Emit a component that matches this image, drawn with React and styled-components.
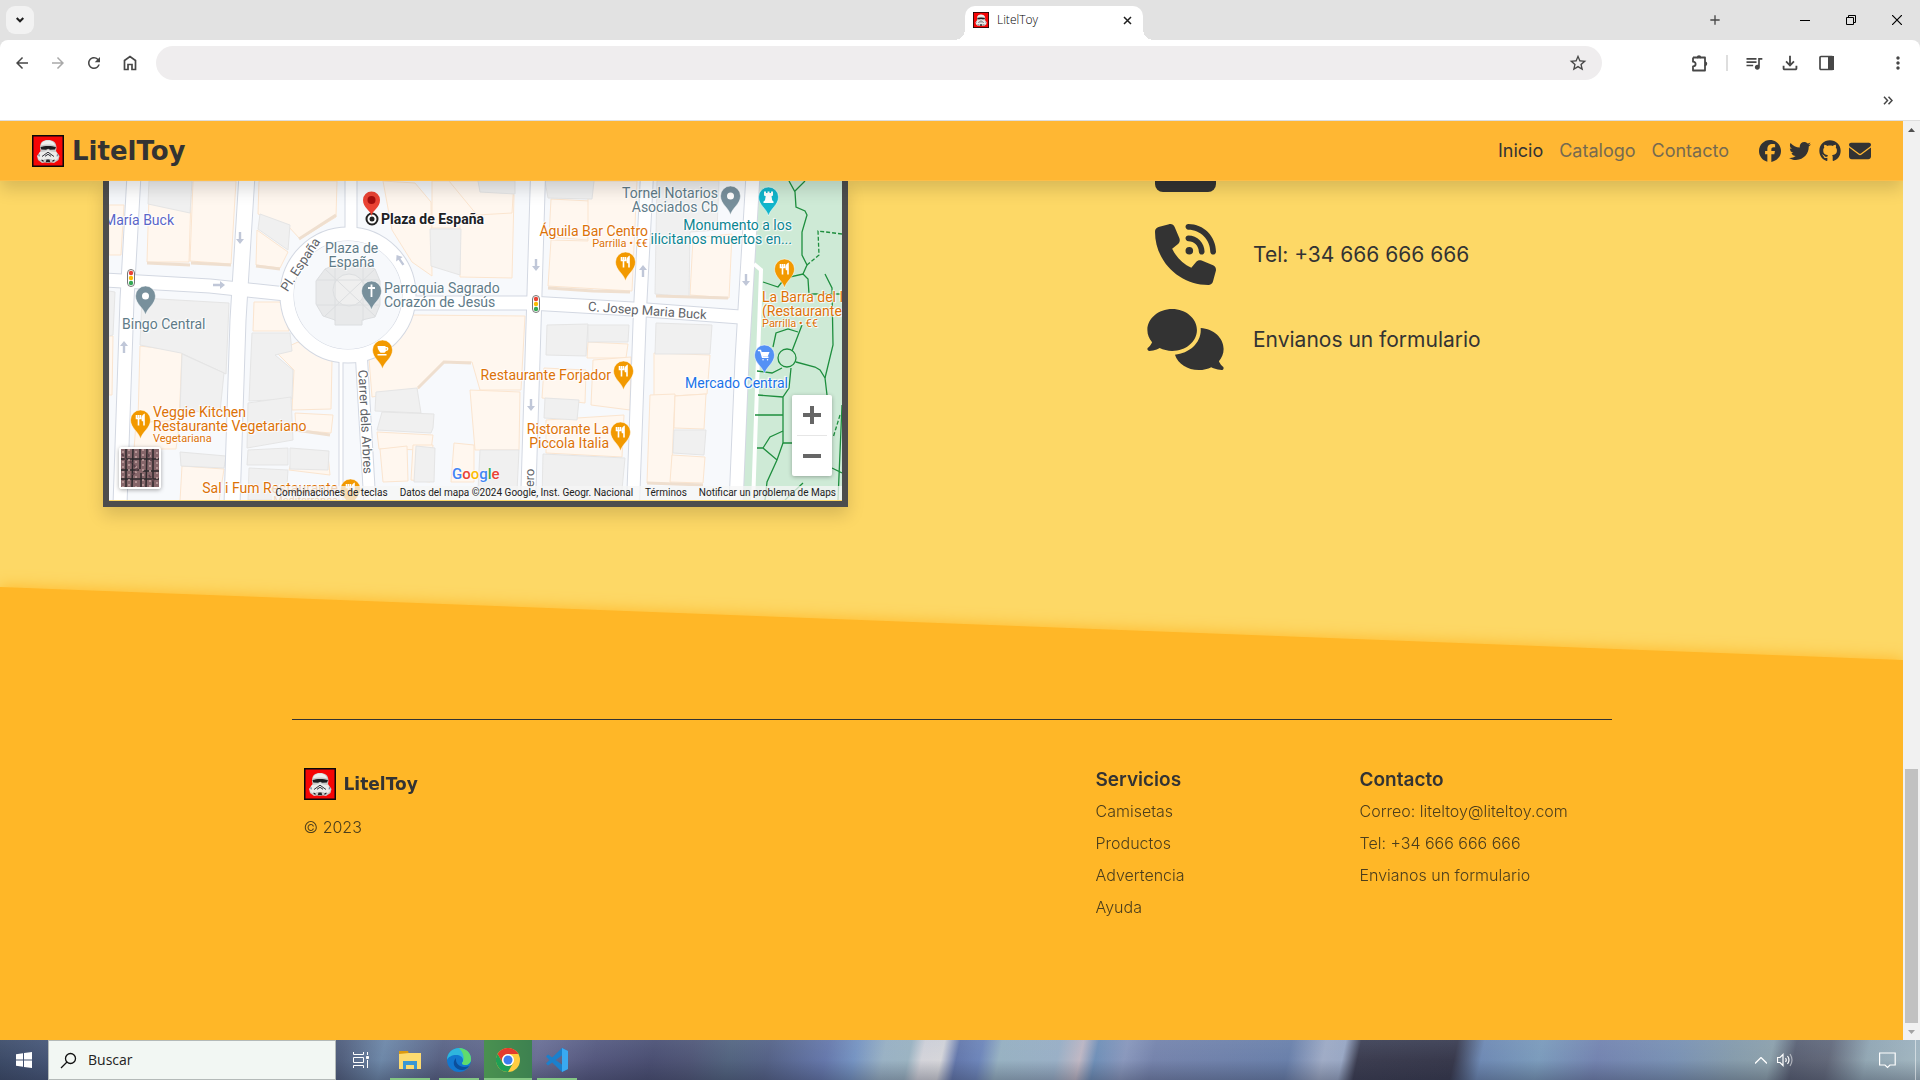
import React from "react";
import styled, { createGlobalStyle } from "styled-components";
import { FaFacebook, FaTwitter, FaGithub, FaEnvelope, FaPhoneVolume, FaComments } from "react-icons/fa6";
import {
  MdArrowBack, MdArrowForward, MdRefresh, MdStarOutline,
  MdQueueMusic, MdOutlineFileDownload, MdMoreVert, MdAdd,
} from "react-icons/md";

const ink = "#333333";
const pageFont = `Inter, Roboto, "Liberation Sans", sans-serif`;
const uiFont = `"Open Sans", "Noto Sans", sans-serif`;
const mapFont = `Roboto, "Liberation Sans", sans-serif`;

const GlobalStyle = createGlobalStyle`
  *, *::before, *::after { box-sizing: border-box; }
  body { margin: 0; font-family: ${pageFont}; color: ${ink}; }
  h2, p, ul { margin: 0; padding: 0; }
  ul { list-style: none; }
  a { color: inherit; text-decoration: none; }
  button { border: 0; padding: 0; background: none; color: inherit; font: inherit; }
  svg { display: block; }
`;

const Screen = styled.div`
  display: flex;
  flex-direction: column;
  height: 100vh;
  overflow: hidden;
`;

/* ---------- browser chrome ---------- */
const TabStrip = styled.div`
  display: grid;
  grid-template-columns: 965fr 178px 777fr;
  height: 40px;
  flex: none;
  background: #e2e2e2;
`;
const TabSearch = styled.button`
  display: grid;
  place-items: center;
  width: 28px;
  height: 28px;
  margin: 6px;
  border-radius: 9px;
  background: #f2f2f2;
  color: #1f1f1f;
`;
const Tab = styled.div`
  position: relative;
  display: flex;
  align-items: center;
  gap: 8px;
  margin-top: 6px;
  padding: 0 11px 6px 8px;
  height: 34px;
  border-radius: 10px 10px 0 0;
  background: #fff;
  font: 12px/16px ${uiFont};
  color: #1f1f1f;
  &::before, &::after {
    content: "";
    position: absolute;
    bottom: 0;
    width: 11px;
    height: 11px;
  }
  &::before { left: -11px; background: radial-gradient(circle at 0 0, transparent 11px, #fff 11px); }
  &::after { right: -11px; background: radial-gradient(circle at 100% 0, transparent 11px, #fff 11px); }
`;
const TabTitle = styled.span`
  flex: 1;
  font-weight: 300;
  color: #000;
`;
const WindowControls = styled.div`
  display: flex;
  justify-content: flex-end;
  align-items: center;
`;
const WindowButton = styled.button`
  display: grid;
  place-items: center;
  width: 46px;
  height: 40px;
  color: #000;
`;
const NewTab = styled(WindowButton)`
  margin-right: 44px;
  color: #474747;
`;
const ToolbarBack = styled.div`
  flex: none;
  background: #e2e2e2;
`;
const Toolbar = styled.div`
  display: flex;
  align-items: center;
  height: 46px;
  padding: 0 4px;
  border-radius: 8px 8px 0 0;
  background: #fff;
`;
const ToolButton = styled.button`
  display: grid;
  place-items: center;
  width: 36px;
  height: 34px;
  color: ${(p) => (p.$dim ? "#a9a9a9" : "#474747")};
`;
const Omnibox = styled.div`
  display: flex;
  align-items: center;
  flex: 1;
  height: 34px;
  margin: 0 80px 0 8px;
  padding-right: 6px;
  border-radius: 17px;
  background: #efedee;
`;
const Address = styled.input`
  flex: 1;
  min-width: 0;
  height: 34px;
  padding: 0 16px;
  border: 0;
  outline: 0;
  background: transparent;
  font: 14px ${uiFont};
`;
const Divider = styled.span`
  width: 2px;
  height: 16px;
  margin: 0 8px;
  background: #dedede;
`;
const MenuButton = styled(ToolButton)`margin-left: 36px;`;
const BookmarksBar = styled.div`
  display: flex;
  align-items: center;
  justify-content: flex-end;
  flex: none;
  height: 35px;
  padding: 0 14px 6px 0;
  border-bottom: 1px solid #dedede;
  background: #fff;
`;
const Viewport = styled.div`
  display: flex;
  flex: 1;
  min-height: 0;
`;
const Scrollbar = styled.div`
  display: flex;
  flex-direction: column;
  align-items: center;
  width: 17px;
  background: #f1f1f1;
`;
const ScrollArrow = styled.span`
  display: grid;
  place-items: center;
  height: 17px;
`;
const ScrollTrack = styled.div`
  display: flex;
  flex-direction: column;
  flex: 1;
  width: 13px;
  &::before { content: ""; flex: 631; }
  &::after { content: ""; flex: 254; background: #c1c1c1; }
`;

/* ---------- site ---------- */
const Site = styled.div`
  display: flex;
  flex-direction: column;
  flex: 1;
  min-width: 0;
  overflow: hidden;
  background: #fdd866;
`;
const SiteHeader = styled.header`
  position: relative;
  z-index: 1;
  display: flex;
  align-items: center;
  justify-content: space-between;
  flex: none;
  height: 60px;
  padding: 0 32px;
  border-bottom: 1px solid #ffbd47;
  background: #ffb733;
  box-shadow: 0 8px 16px rgba(0, 0, 0, 0.15);
`;
const Brand = styled.a`
  display: flex;
  align-items: center;
  gap: 8px;
  font: 700 ${(p) => (p.$small ? 17 : 26)}px/32px "DejaVu Sans", "Open Sans", sans-serif;
  color: ${ink};
`;
const HeaderNav = styled.nav`
  display: flex;
  align-items: center;
  gap: 16px;
  font-size: 18px;
  line-height: 24px;
`;
const NavLink = styled.a`color: ${(p) => (p.$active ? ink : "#766a50")};`;
const Social = styled.div`
  display: flex;
  gap: 8px;
  margin-left: 14px;
`;
const ContactSection = styled.section`
  display: grid;
  grid-template-columns: 1fr 1fr;
  flex: none;
  padding-bottom: 80px;
`;
const MapColumn = styled.div`padding: 0 104px 0 103px;`;
const MapFrame = styled.div`
  border: solid #4d4d4d;
  border-width: 0 6px 6px;
  box-shadow: 0 8px 16px rgba(0, 0, 0, 0.15);
`;
const ContactList = styled.div`
  display: flex;
  flex-direction: column;
  padding-left: 189px;
`;
const ContactRow = styled.a`
  display: grid;
  grid-template-columns: 88px 1fr;
  align-items: center;
  justify-items: center;
  gap: 24px;
  margin-bottom: 24px;
  font-size: 21px;
  line-height: 32px;
  & > span { justify-self: start; }
`;
const CutIcon = styled.span`
  width: 61px;
  height: 11px;
  margin: 0 0 32px 14px;
  border-radius: 0 0 8px 8px;
  background: ${ink};
`;
const PhoneIcon = styled(FaPhoneVolume)`
  width: 61px;
  height: 61px;
`;
const ChatIcon = styled(FaComments)`
  width: 77px;
  height: 61px;
`;
const FooterGlow = styled.div`
  display: flex;
  flex: 1;
  filter: drop-shadow(0 0 8px #ffb727);
`;
const Footer = styled.footer`
  flex: 1;
  padding-top: 132px;
  background: #ffb727;
  clip-path: polygon(0 0, 100% 73px, 100% 100%, 0 100%);
`;
const FooterGrid = styled.div`
  display: grid;
  grid-template-columns: 3fr 1fr 1fr;
  max-width: 1320px;
  margin: 0 auto;
  padding-top: 48px;
  border-top: 1px solid ${ink};
`;
const FooterCol = styled.div`
  padding: 0 12px;
  font-size: 16px;
  font-weight: 300;
  line-height: 24px;
  color: #4c3e1c;
`;
const Copyright = styled.p`margin-top: 15px;`;
const FooterTitle = styled.h2`
  margin-bottom: 7px;
  font-size: 19px;
  font-weight: 600;
  line-height: 24px;
  color: ${ink};
`;
const FooterList = styled.ul`
  display: grid;
  gap: 8px;
`;

/* ---------- map ---------- */
const MapCanvas = styled.div`
  position: relative;
  height: 320px;
  overflow: hidden;
  border-bottom: 1px solid #fdd866;
  background: #f7f9fc;
  font-family: ${mapFont};
`;
const Label = styled.span`
  position: absolute;
  top: ${(p) => p.$y - 181}px;
  ${(p) => (p.$align === "right" ? `right: ${842 - p.$x}px` : `left: ${p.$x - 109}px`)};
  text-align: ${(p) => p.$align || "left"};
  font-size: 14px;
  line-height: 14px;
  font-weight: ${(p) => (p.$bold ? 700 : 400)};
  white-space: pre;
  color: ${(p) => p.$color};
  text-shadow: 0 0 2px #fff, 0 0 2px #fff, 1px 1px 1px #fff, -1px -1px 1px #fff;
  & > small { display: block; font-size: 11px; line-height: 12px; }
`;
const MapFooter = styled.div`
  position: absolute;
  right: 0;
  bottom: 0;
  display: flex;
  gap: 12px;
  padding: 0 6px 0 4px;
  background: rgba(245, 245, 245, 0.75);
  font-size: 10px;
  line-height: 14px;
  color: #222;
`;
const Satellite = styled.button`
  position: absolute;
  left: 10px;
  bottom: 11px;
  border: 2px solid #fff;
  border-radius: 3px;
  box-shadow: 0 1px 4px rgba(0, 0, 0, 0.35);
`;
const ZoomBox = styled.div`
  position: absolute;
  right: 10px;
  bottom: 24px;
  width: 40px;
  border-radius: 2px;
  background: #fff;
  color: #666;
  box-shadow: 0 1px 4px rgba(0, 0, 0, 0.3);
`;
const ZoomButton = styled.button`
  display: grid;
  place-items: center;
  width: 40px;
  height: 40px;
`;
const ZoomRule = styled.div`
  height: 1px;
  margin: 0 5px;
  background: #e6e6e6;
`;
const GoogleMark = styled.span`
  position: absolute;
  left: 343px;
  top: 283px;
  font: 500 15px/20px ${mapFont};
  text-shadow: 0 0 2px #fff, 0 0 2px #fff;
`;
const Letter = styled.span`color: ${(p) => p.$c};`;

/* ---------- taskbar ---------- */
const Taskbar = styled.div`
  display: flex;
  flex: none;
  height: 40px;
  background:
    linear-gradient(180deg, rgba(160, 180, 210, 0.12), transparent 50%, rgba(25, 30, 50, 0.28)),
    linear-gradient(102deg, #3c4a66 0%, #4a5a7c 4%, #46526f 17%, #53617f 18%, #6e88a8 20%, #596283 23%,
      #6a6e94 28%, #55587e 31%, #4b4f72 34%, #505676 36%, #53647f 38%, #556286 40%, #6678ab 43%, #7694c2 44.5%,
      #9ab2c4 46%, #9cb4c2 47.3%, #d4d4da 48%, #d6d6da 49%, #6478ac 49.8%, #6e86ba 51%, #98b2c2 52%,
      #9ab0c6 55%, #c0b8c4 56.2%, #7090b8 57%, #8a98bc 58.5%, #7684ac 60%, #6a80aa 67%, #a0acc6 68.8%,
      #9aa8c4 69.8%, #3c3d50 70.6%, #38394c 75.6%, #6f8ab4 77%, #7c9cbc 80%, #7484b0 83%, #7a92b4 87%,
      #869cac 90%, #8ea2ac 92%, #5a6072 93.2%, #63697a 95%, #93a8b4 97%, #a4b8c2 100%);
`;
const TaskButton = styled.button`
  display: grid;
  place-items: center;
  width: 48px;
  height: 40px;
  margin-right: 1px;
  color: #fff;
  background: ${(p) => (p.$active ? "linear-gradient(90deg, #4a9150, #3d8150)" : "none")};
  ${(p) => p.$running && `background-image: linear-gradient(#84c784, #84c784);
    background-size: 40px 2px; background-repeat: no-repeat; background-position: 50% 100%;`}
  ${(p) => p.$active && "box-shadow: inset 0 -2px #84c784;"}
`;
const StartButton = styled(TaskButton)`margin-right: 0;`;
const SearchBox = styled.label`
  display: flex;
  align-items: center;
  gap: 11px;
  width: 288px;
  padding-left: 11px;
  border: 1px solid #b4bab8;
  background: #f2f7f3;
  margin-right: 1px;
`;
const SearchInput = styled.input`
  flex: 1;
  min-width: 0;
  border: 0;
  padding: 0;
  outline: 0;
  background: transparent;
  font: 14px/20px ${uiFont};
  color: #222;
  &::placeholder { color: #222; opacity: 1; }
`;
const Tray = styled.div`
  display: flex;
  align-items: center;
  margin-left: auto;
  color: #fff;
`;
const TrayButton = styled.button`
  display: grid;
  place-items: center;
  width: 24px;
  height: 40px;
`;
const Notifications = styled(TrayButton)`
  width: 56px;
  margin-left: 63px;
  border-right: 1px solid rgba(255, 255, 255, 0.5);
  margin-right: 4px;
`;

/* ---------- drawings ---------- */
const Trooper = ({ size }) => (
  <svg width={size} height={size} viewBox="0 0 32 32" aria-hidden="true">
    <path fill="#090909" d="M0 0h32v32H0z" />
    <path fill="#f60505" d="M1.500 1.500h29v29h-29z" />
    <path fill="#c9c9c8" d="M8 13C8 7 11 5 16 5s8.500 2 8.500 8l-.5 3 3.500 5-1 4-4.500 3-3-.5-3 .5-3-.5-3 .5-4-3-1-4 3.500-5z" />
    <path fill="#efefed" d="M9 10.500c.5-3.500 3-5 7-5 3.500 0 6.500 1.500 7 5-3-1.300-10.500-1.300-14 0z" />
    <path fill="#1d1d20" d="M8.500 12c4-1.500 11-1.500 15.500 0l-1 2.500-4.800.2-2-.9-2.200.9-4.700-.2z" />
    <path fill="#ececea" d="M8 17l5-.5 3-1.500 3 1.500 5 .5 2.500 4-1 3-4 2-2-2h-7l-2 2-4-2-1-3z" />
    <path fill="none" stroke="#303036" strokeWidth="1" d="M10 21.500l6-4.300 6 4.300M13 21.300l3-2 3 2" />
    <path fill="#222226" d="M14.500 24.500h3l.8 2.800h-4.600zM9.500 24.500l2 .8v1.700l-2-1.200zM22.500 24.500l-2 .8v1.700l2-1.200z" />
    <path fill="#7d8ba0" d="M6 19.500l1.500-.5.5 2.500-1.500-.2zM26.500 19.500L25 19l-.5 2.500 1.500-.2z" />
  </svg>
);

const glyphs = {
  dot: <circle r="3.500" fill="#fff" />,
  fork: <path fill="none" stroke="#fff" strokeWidth="1.600" d="M-4-5v3.500h4V-5M-2-5V5.500M3.500 5.500V-5c-1.500 1-2 3-1.500 5.500h1.500" />,
  cross: <path fill="none" stroke="#fff" strokeWidth="1.800" d="M0-6.500V6M-3.500-3h7" />,
  cup: <path fill="#fff" d="M-5-4h8v1h1.500c2 0 2 4-1 4-.7 1.300-1.500 1.800-2.500 1.800h-3C-4-.2-5-1-5-4zM-5 4h9v1.500h-9zM3.300-2v2c1.200 0 1.400-2 0-2z" />,
  rook: <path fill="#fff" d="M-4.500-5.500h2v1.500h1.500v-1.500h2v1.500h1.500v-1.500h2v4l-1.500.7.700 4L5 4.500V6H-5V4.500l1.500-1.300.7-4-1.700-.7z" />,
  cart: (
    <>
      <path fill="#fff" d="M-3.500-3h8.500l-1.800 4.500h-5.200z" />
      <path fill="none" stroke="#fff" strokeWidth="1.400" d="M-6-4.500h2L-2 2.200h5.500M-1.500 4.700h.1M3 4.700h.1" strokeLinecap="round" />
    </>
  ),
};
const Pin = ({ x, y, color, glyph }) => (
  <g transform={`translate(${x} ${y})`}>
    <path fill={color} stroke="#fff" strokeWidth="0.500" d="M0 19C-1.500 12-10 8-10 0a10 10 0 0 1 20 0C10 8 1.500 12 0 19z" />
    {glyphs[glyph]}
  </g>
);
const pins = [
  [145.5, 296, "#78909c", "dot"], [371.5, 291, "#78909c", "cross"], [382.5, 350, "#f29900", "cup"],
  [140.5, 420, "#f29900", "fork"], [350.5, 489, "#f29900", "fork"], [730.5, 196, "#78909c", "dot"],
  [768.5, 197, "#12b5cb", "rook"], [625.5, 262, "#f29900", "fork"], [784.5, 269, "#f29900", "fork"],
  [764.5, 355, "#5491f5", "cart"], [623.5, 371, "#f29900", "fork"], [620.5, 432, "#f29900", "fork"],
];
const roads = [
  ["M134 175L127 300L120 505", 13], ["M247 175L238 320L232 505", 15], ["M105 280L210 286L286 294", 13],
  ["M351 175V236", 11], ["M361 350L370 505", 11], ["M341 358V505", 3],
  ["M406 303H530L633 309L740 317", 13], ["M538 175L534 310L528 505", 14],
  ["M647 175L640 310L633 505", 12], ["M753 175L742 360L736 505", 13],
];
const arrows = [[240, 238, 180], [219, 285, 90], [124, 347, 0], [400, 260, -35], [536, 265, 180], [643, 271, 0], [746, 280, 180], [531, 405, 180]];
const cream = [
  "149 195 191 195 189 262 147 262", "193 181 236 181 231 264 190 261", "109 205 124 205 121 255 109 255",
  "259 181 337 181 336 217 300 239 288 226 258 214", "257 230 288 252 280 268 256 265",
  "383 181 415 183 431 202 432 276 412 262 392 230", "432 181 480 181 480 228 432 228",
  "480 195 514 195 512 278 460 277 460 218 490 213", "254 302 280 302 289 331 253 331",
  "140 346 182 351 179 425 138 420", "109 336 113 336 112 395 109 395", "276 352 298 342 332 361 331 409 292 410 294 370",
  "295 413 333 415 331 433 296 430", "412 315 525 316 521 390 480 390 472 362 445 362 418 389 372 397 369 359",
  "377 432 433 435 431 450 379 449", "380 449 407 446 408 481 383 482", "470 390 520 392 519 450 475 450",
  "454 443 474 445 474 482 451 482", "182 466 224 469 219 501 180 501", "551 199 590 201 588 240 549 237",
  "588 181 637 181 632 291 548 286 551 240 588 241", "693 238 732 234 729 298 690 295",
  "588 342 628 344 626 358 587 358", "544 368 586 370 585 403 542 398", "593 360 631 357 630 410 591 405",
  "546 420 624 415 622 457 546 453", "654 353 710 355 707 394 654 397", "650 395 675 394 671 484 647 483",
  "675 396 706 394 704 429 674 428", "672 455 705 457 703 483 670 482", "449 181 514 181 512 213 477 215",
  "136 423 180 420 176 449 134 449", "295 450 328 455 330 475 289 470", "413 445 433 445 430 482 411 480",
];
const grey = [
  "149 181 192 181 190 213 148 204", "260 214 290 225 288 250 258 229", "142 298 229 303 226 374 181 353 140 345",
  "109 291 115 292 113 335 109 336", "252 333 290 333 292 351 275 355 293 370 292 399 249 401",
  "182 354 224 373 220 412 180 411", "248 403 291 397 293 440 247 448", "290 448 329 451 328 470 290 469",
  "430 229 461 229 460 275 431 266", "376 392 417 388 421 413 375 411", "382 412 434 414 433 428 431 433 377 430",
  "416 446 435 448 434 482 414 482", "480 450 519 450 517 491 478 490", "478 181 515 181 515 194 480 192",
  "545 181 594 181 592 199 548 198", "657 181 719 181 717 230 690 232 689 297 655 294",
  "547 325 588 324 586 356 546 355", "588 325 629 325 628 342 588 342", "545 398 579 400 577 420 544 418",
  "656 323 712 325 710 354 655 354", "674 430 706 430 704 455 673 453", "543 454 625 458 621 500 542 500",
  "180 452 226 456 224 468 181 466", "248 450 288 448 288 465 247 465", "249 468 288 470 286 500 248 500",
];
const paths = [
  "M789 181l6 11 1 15 9 4 2 4-5 17v23l5 10-4 9M805 181l-10 10",
  "M763 282l15 5 7-9 18-4 5 5 1 15h33M802 325l-10 26",
  "M773 347l3-14 12-4 10 3M757 371l15 2 10-5M796 362l19 5 5 3 5 8 2 17",
  "M825 378l8-33-1-57-7-14M791 368l-2 20-6 9v46h9M758 395l25 2M755 415h28",
  "M783 431l-13 6-7 11 14 12 6-17M757 448h6M777 460l-10 22-2 18",
  "M832 468l10 5M842 405l-4 95M803 483l-18 17",
];

const CityMap = () => (
  <svg width="733" height="319" viewBox="109 181 733 319" aria-hidden="true">
    <g fill="#fff7ef" stroke="#fbe5cf">{cream.map((p) => <polygon key={p} points={p} />)}</g>
    <g fill="#f0f0f0" stroke="#e5e5e5">{grey.map((p) => <polygon key={p} points={p} />)}</g>
    <g fill="none" stroke="#efdfcf" strokeWidth="3">
      <path d="M147 263l43 2M191 263l40 2M256 266l24 3M299 239l37-24M548 288l45 3 37 1M656 296l72 2M647 483l56 2M295 430l35 5M418 388l26-26 27 1" />
    </g>
    <path fill="#ceead6" d="M757 181h85v319H741l11-236z" />
    <g fill="none" stroke="#d3d8e2">{roads.map(([d, w]) => <path key={d} d={d} strokeWidth={w + 2} />)}<circle cx="348" cy="295" r="61" strokeWidth="15" /></g>
    <g fill="none" stroke="#fff">{roads.map(([d, w]) => <path key={d} d={d} strokeWidth={w} />)}<circle cx="348" cy="295" r="61" strokeWidth="13" /></g>
    <path fill="none" stroke="#fff" strokeWidth="4" d="M754 264l7 6-8 235" />
    <circle cx="348" cy="295" r="54" fill="#f7f9fc" />
    <g fill="#e8e9ea" stroke="#dcdee0">
      <path d="M325 269l12-5h26l12 5 5 12v24l-5 12-13 3v5h-27v-5l-12-4-7-12v-23z" />
      <circle cx="349" cy="290" r="16" fill="#efefef" />
      <path fill="none" d="M317 280h62M317 305h62M335 265v56M363 265v56M325 269l50 47M375 269l-50 47" />
    </g>
    <g fill="none" stroke="#1e8e3e" strokeWidth="1.300">
      {paths.map((d) => <path key={d} d={d} />)}
      <circle cx="787" cy="358" r="9" fill="#ceead6" />
      <path d="M842 234l-24-3 1 24-12 10M840 415l-7 23" strokeDasharray="4 2" />
    </g>
    <g fill="#c0c7d8">
      {arrows.map(([x, y, r]) => <path key={`${x}-${y}`} transform={`translate(${x} ${y}) rotate(${r})`} d="M0-6l4 5H1.200v7h-2.400v-7H-4z" />)}
    </g>
    {[[131, 278], [536, 304]].map(([x, y]) => (
      <g key={x} transform={`translate(${x} ${y})`}>
        <rect x="-3.500" y="-8.500" width="7" height="17" rx="3.500" fill="#fff" stroke="#777" />
        <circle cy="-5" r="2.200" fill="#ea4335" /><circle r="2.200" fill="#fbbc04" /><circle cy="5" r="2.200" fill="#34a853" />
      </g>
    ))}
    <g fontFamily="Roboto, sans-serif" fontSize="13" fill="#5f6368" stroke="#fff" strokeWidth="2" paintOrder="stroke" textAnchor="middle">
      <text transform="translate(647 315) rotate(4)">C. Josep Maria Buck</text>
      <text transform="translate(361 422) rotate(87)">Carrer dels Arbres</text>
      <text transform="translate(534 478) rotate(-88)">ero</text>
      <text transform="translate(304 267) rotate(-57)">Pl. España</text>
    </g>
    {pins.map(([x, y, c, g]) => <Pin key={`${x}-${y}`} x={x} y={y} color={c} glyph={g} />)}
    <circle cx="372" cy="219" r="5.500" fill="#fff" stroke="#222" strokeWidth="2" />
    <circle cx="372" cy="219" r="2.500" fill="#222" />
    <path fill="#ea4335" d="M371.500 216c-1-6-8.500-8-8.500-16a8.500 8.500 0 0 1 17 0c0 8-7.500 10-8.500 16z" />
    <circle cx="371.500" cy="200" r="4" fill="#a50e0e" />
  </svg>
);

const orange = "#dc7208";
const slate = "#5f7b88";
const labels = [
  { x: 104, y: 213, c: "#5a66c8", t: "María Buck" },
  { x: 122, y: 317, c: slate, t: "Bingo Central" },
  { x: 381, y: 212, c: "#202124", t: "Plaza de España", bold: true },
  { x: 325, y: 241, c: slate, t: "Plaza de\nEspaña", a: "center" },
  { x: 384, y: 281, c: slate, t: "Parroquia Sagrado\nCorazón de Jesús" },
  { x: 153, y: 405, c: orange, t: "Veggie Kitchen\nRestaurante Vegetariano", s: "Vegetariana" },
  { x: 338, y: 481, c: orange, t: "Sal i Fum Restaurante", s: "Mediterránea", a: "right" },
  { x: 648, y: 224, c: orange, t: "Águila Bar Centro", s: "Parrilla • €€", a: "right" },
  { x: 718, y: 186, c: slate, t: "Tornel Notarios\nAsociados Cb", a: "right" },
  { x: 792, y: 218, c: "#0c8591", t: "Monumento a los\nilicitanos muertos en...", a: "right" },
  { x: 762, y: 290, c: orange, t: "La Barra del I\n(Restaurante", s: "Parrilla • €€" },
  { x: 685, y: 376, c: "#1a73e8", t: "Mercado Central" },
  { x: 611, y: 368, c: orange, t: "Restaurante Forjador", a: "right" },
  { x: 609, y: 422, c: orange, t: "Ristorante La\nPiccola Italia", a: "right" },
];
const google = [["G", "#4285f4"], ["o", "#ea4335"], ["o", "#fbbc04"], ["g", "#4285f4"], ["l", "#34a853"], ["e", "#ea4335"]];

const ContactMap = () => (
  <MapCanvas>
    <CityMap />
    {labels.map((l) => (
      <Label key={l.t} $x={l.x} $y={l.y} $color={l.c} $align={l.a} $bold={l.bold}>
        {l.t}{l.s && <small>{l.s}</small>}
      </Label>
    ))}
    <GoogleMark>{google.map(([ch, c], i) => <Letter key={i} $c={c}>{ch}</Letter>)}</GoogleMark>
    <Satellite aria-label="Satélite">
      <svg width="38" height="38" viewBox="0 0 38 38">
        <path fill="#86666a" d="M0 0h38v38H0z" />
        <path stroke="#2e2a2d" strokeWidth="1.500" d="M5 0v38M12 0l-1 38M19 0v20M20 24v14M26 0l-1 38M32 0v38M0 10h38M0 21h18M22 22h16M0 30h38" />
        <path stroke="#c3a4a2" strokeWidth="1.500" strokeDasharray="2 3" d="M8 0v38M15 2v36M22 0v38M29 1v37M36 3v35M2 2v36" />
        <path stroke="#5d434b" strokeWidth="2" strokeDasharray="3 2" d="M9 12l7 8-5 7M1 5l4 6M27 5l4 8M28 26l6 8" fill="none" />
      </svg>
    </Satellite>
    <ZoomBox>
      <ZoomButton aria-label="Acercar"><svg width="18" height="18"><path stroke="currentColor" strokeWidth="4" d="M9 0v18M0 9h18" /></svg></ZoomButton>
      <ZoomRule />
      <ZoomButton aria-label="Alejar"><svg width="18" height="18"><path stroke="currentColor" strokeWidth="4" d="M0 9h18" /></svg></ZoomButton>
    </ZoomBox>
    <MapFooter>
      <span>Combinaciones de teclas</span>
      <span>Datos del mapa ©2024 Google, Inst. Geogr. Nacional</span>
      <span>Términos</span>
      <span>Notificar un problema de Maps</span>
    </MapFooter>
  </MapCanvas>
);

const BrowserChrome = () => (
  <>
    <TabStrip>
      <div>
        <TabSearch aria-label="Buscar pestañas">
          <svg width="8" height="6" fill="none" stroke="currentColor" strokeWidth="2"><path d="M.700 1L4 4.300 7.300 1" /></svg>
        </TabSearch>
      </div>
      <Tab>
        <Trooper size={16} />
        <TabTitle>LitelToy</TabTitle>
        <button aria-label="Cerrar pestaña">
          <svg width="9" height="9" stroke="currentColor" strokeWidth="1.500"><path d="M1 1l7 7M8 1L1 8" /></svg>
        </button>
      </Tab>
      <WindowControls>
        <NewTab aria-label="Nueva pestaña"><MdAdd size={16} /></NewTab>
        <WindowButton aria-label="Minimizar"><svg width="10" height="10"><path stroke="currentColor" d="M0 5.500h10" /></svg></WindowButton>
        <WindowButton aria-label="Restaurar"><svg width="10" height="10" fill="none" stroke="currentColor"><path d="M.5 2.500h7v7h-7zM2.500 2.500v-2h7v7h-2" /></svg></WindowButton>
        <WindowButton aria-label="Cerrar"><svg width="10" height="10"><path stroke="currentColor" strokeWidth="1.200" d="M0 0l10 10M10 0L0 10" /></svg></WindowButton>
      </WindowControls>
    </TabStrip>
    <ToolbarBack>
      <Toolbar>
        <ToolButton aria-label="Atrás"><MdArrowBack size={18} /></ToolButton>
        <ToolButton aria-label="Adelante" $dim><MdArrowForward size={18} /></ToolButton>
        <ToolButton aria-label="Recargar"><MdRefresh size={18} /></ToolButton>
        <ToolButton aria-label="Inicio">
          <svg width="14" height="16" fill="none" stroke="currentColor" strokeWidth="1.700"><path d="M1.500 14.500v-9L7 1.500l5.500 4v9H9v-5H5v5z" /></svg>
        </ToolButton>
        <Omnibox>
          <Address aria-label="Dirección" />
          <ToolButton aria-label="Añadir a marcadores"><MdStarOutline size={20} /></ToolButton>
        </Omnibox>
        <ToolButton aria-label="Extensiones">
          <svg width="18" height="18" fill="none" stroke="currentColor" strokeWidth="1.800">
            <path d="M2 3.500h4.500M9.500 3.500h4.500v4.500M14 11.500v5H2v-4.200c3.500 0 3.500-4.600 0-4.600V3.500" strokeLinejoin="round" />
            <path fill="currentColor" stroke="none" d="M5.800 3.500a2.200 2.200 0 0 1 4.400 0zM14 7.500a2.200 2.200 0 0 1 0 4.500z" />
            <path d="M6 3.500h4M14 8v4" />
          </svg>
        </ToolButton>
        <Divider />
        <ToolButton aria-label="Controlar multimedia"><MdQueueMusic size={20} /></ToolButton>
        <ToolButton aria-label="Descargas"><MdOutlineFileDownload size={22} /></ToolButton>
        <ToolButton aria-label="Panel lateral">
          <svg width="15" height="16"><rect x="1" y="1.500" width="13" height="13" rx="1" fill="none" stroke="currentColor" strokeWidth="1.700" /><path fill="currentColor" d="M9 1h6v14H9z" /></svg>
        </ToolButton>
        <MenuButton aria-label="Menú"><MdMoreVert size={20} /></MenuButton>
      </Toolbar>
    </ToolbarBack>
    <BookmarksBar>
      <ToolButton aria-label="Más marcadores">
        <svg width="10" height="9" fill="none" stroke="currentColor" strokeWidth="1.500"><path d="M1 .700l3.500 3.800L1 8.300M5.500.700L9 4.500 5.500 8.300" /></svg>
      </ToolButton>
    </BookmarksBar>
  </>
);

const WindowsTaskbar = () => (
  <Taskbar>
    <StartButton aria-label="Inicio"><svg width="16" height="16" fill="currentColor"><path d="M0 2.200L7 1.200v6.300H0zM8 1l8-1v7.500H8zM0 8.500h7v6.300l-7-1zM8 8.500h8V16l-8-1z" /></svg></StartButton>
    <SearchBox>
      <svg width="17" height="17" fill="none" stroke="#111" strokeWidth="1.300"><circle cx="10.500" cy="6.500" r="5" /><path d="M7 10L1 16" /></svg>
      <SearchInput placeholder="Buscar" aria-label="Buscar" />
    </SearchBox>
    <TaskButton aria-label="Vista de tareas"><svg width="18" height="16" fill="none" stroke="currentColor"><path d="M1.500 0v2.500h10V0M1.500 5.500h10v5h-10zM1.500 16v-2.500h10V16M15.500 0v3M15.500 8v8" /><path fill="currentColor" d="M14.500 4.500h2v2h-2z" /></svg></TaskButton>
    <TaskButton aria-label="Explorador" $running><svg width="22" height="18"><path fill="#dc9a10" d="M0 0h9l1 3H0z" /><path fill="#fddb70" d="M0 3l10-1h12v16H0z" /><path fill="#3b97d3" d="M4 10h14v8h-3v-4H7v4H4z" /></svg></TaskButton>
    <TaskButton aria-label="Edge" $running>
      <svg width="24" height="24" viewBox="0 0 24 24"><circle cx="12" cy="12" r="12" fill="#1277cf" /><path fill="#2fb6dd" d="M0 12C0 5 5 0 12 0s12 5 12 11c0 4-3 6-6 6-2 0-3-1-3-2 1-1 1-2 1-3 0-3-3-5-7-5-4 0-8 2-9 5z" /><path fill="#5fdc6c" d="M12 0c7 0 12 5 12 11 0 4-3 6-6 6-2 0-3-1-3-2 3-3 2-10-3-15z" /><path fill="#0b4f9c" d="M9 10c-5 5-1 12 6 12 3 0 6-2 7-4-7 3-14-1-13-8z" /></svg>
    </TaskButton>
    <TaskButton aria-label="Chrome" $active>
      <svg width="24" height="24" viewBox="0 0 24 24"><circle cx="12" cy="12" r="12" fill="#ffcd40" /><path fill="#e33b2e" d="M1.600 6A12 12 0 0 1 22.400 6H12a6 6 0 0 0-5.200 9z" /><path fill="#1fa055" d="M1.600 6A12 12 0 0 0 12 24l5.200-9A6 6 0 0 1 6.800 15z" /><circle cx="12" cy="12" r="6" fill="#fff" /><circle cx="12" cy="12" r="4.500" fill="#3b7ded" /></svg>
    </TaskButton>
    <TaskButton aria-label="Visual Studio Code" $running>
      <svg width="24" height="24" viewBox="0 0 24 24"><path fill="#1b80cc" d="M17 0L1 15.500l2 2L19 6v12L3 6.500l-2 2L17 24l6-3V3z" /><path fill="#39a9f2" d="M17 0l6 3v18l-6 3z" /></svg>
    </TaskButton>
    <Tray>
      <TrayButton aria-label="Mostrar iconos ocultos"><svg width="12" height="7" fill="none" stroke="currentColor" strokeWidth="1.300"><path d="M0 6.500l6-6 6 6" /></svg></TrayButton>
      <TrayButton aria-label="Volumen"><svg width="17" height="14" fill="none" stroke="currentColor" strokeWidth="1.200"><path d="M.5 4.500h2.500l3-3v11l-3-3H.500zM8.500 5q1.500 2 0 4M10.500 3q3 4 0 8" /><path opacity=".5" d="M13 1q4 6 0 12" /></svg></TrayButton>
      <Notifications aria-label="Notificaciones"><svg width="17" height="17" fill="none" stroke="currentColor" strokeWidth="1.200"><path d="M.600 1h15.600v12H11l-2.500 2.500L6 13H.600z" /></svg></Notifications>
    </Tray>
  </Taskbar>
);

export default function App() {
  return (
    <Screen>
      <GlobalStyle />
      <BrowserChrome />
      <Viewport>
        <Site>
          <SiteHeader>
            <Brand href="#"><Trooper size={32} />LitelToy</Brand>
            <HeaderNav>
              <NavLink href="#" $active>Inicio</NavLink>
              <NavLink href="#">Catalogo</NavLink>
              <NavLink href="#">Contacto</NavLink>
              <Social>
                <a href="#" aria-label="Facebook"><FaFacebook size={22} /></a>
                <a href="#" aria-label="Twitter"><FaTwitter size={22} /></a>
                <a href="#" aria-label="GitHub"><FaGithub size={22} /></a>
                <a href="#" aria-label="Correo"><FaEnvelope size={22} /></a>
              </Social>
            </HeaderNav>
          </SiteHeader>
          <ContactSection>
            <MapColumn><MapFrame><ContactMap /></MapFrame></MapColumn>
            <ContactList>
              <CutIcon />
              <ContactRow href="#"><PhoneIcon /><span>Tel: +34 666 666 666</span></ContactRow>
              <ContactRow href="#"><ChatIcon /><span>Envianos un formulario</span></ContactRow>
            </ContactList>
          </ContactSection>
          <FooterGlow>
            <Footer>
              <FooterGrid>
                <FooterCol>
                  <Brand href="#" $small><Trooper size={32} />LitelToy</Brand>
                  <Copyright>© 2023</Copyright>
                </FooterCol>
                <FooterCol>
                  <FooterTitle>Servicios</FooterTitle>
                  <FooterList>
                    <li><a href="#">Camisetas</a></li>
                    <li><a href="#">Productos</a></li>
                    <li><a href="#">Advertencia</a></li>
                    <li><a href="#">Ayuda</a></li>
                  </FooterList>
                </FooterCol>
                <FooterCol>
                  <FooterTitle>Contacto</FooterTitle>
                  <FooterList>
                    <li><a href="#">Correo: liteltoy@liteltoy.com</a></li>
                    <li><a href="#">Tel: +34 666 666 666</a></li>
                    <li><a href="#">Envianos un formulario</a></li>
                  </FooterList>
                </FooterCol>
              </FooterGrid>
            </Footer>
          </FooterGlow>
        </Site>
        <Scrollbar>
          <ScrollArrow><svg width="7" height="4" fill="#505050"><path d="M0 4l3.500-4L7 4z" /></svg></ScrollArrow>
          <ScrollTrack />
          <ScrollArrow><svg width="7" height="4" fill="#a3a3a3"><path d="M0 0l3.500 4L7 0z" /></svg></ScrollArrow>
        </Scrollbar>
      </Viewport>
      <WindowsTaskbar />
    </Screen>
  );
}
